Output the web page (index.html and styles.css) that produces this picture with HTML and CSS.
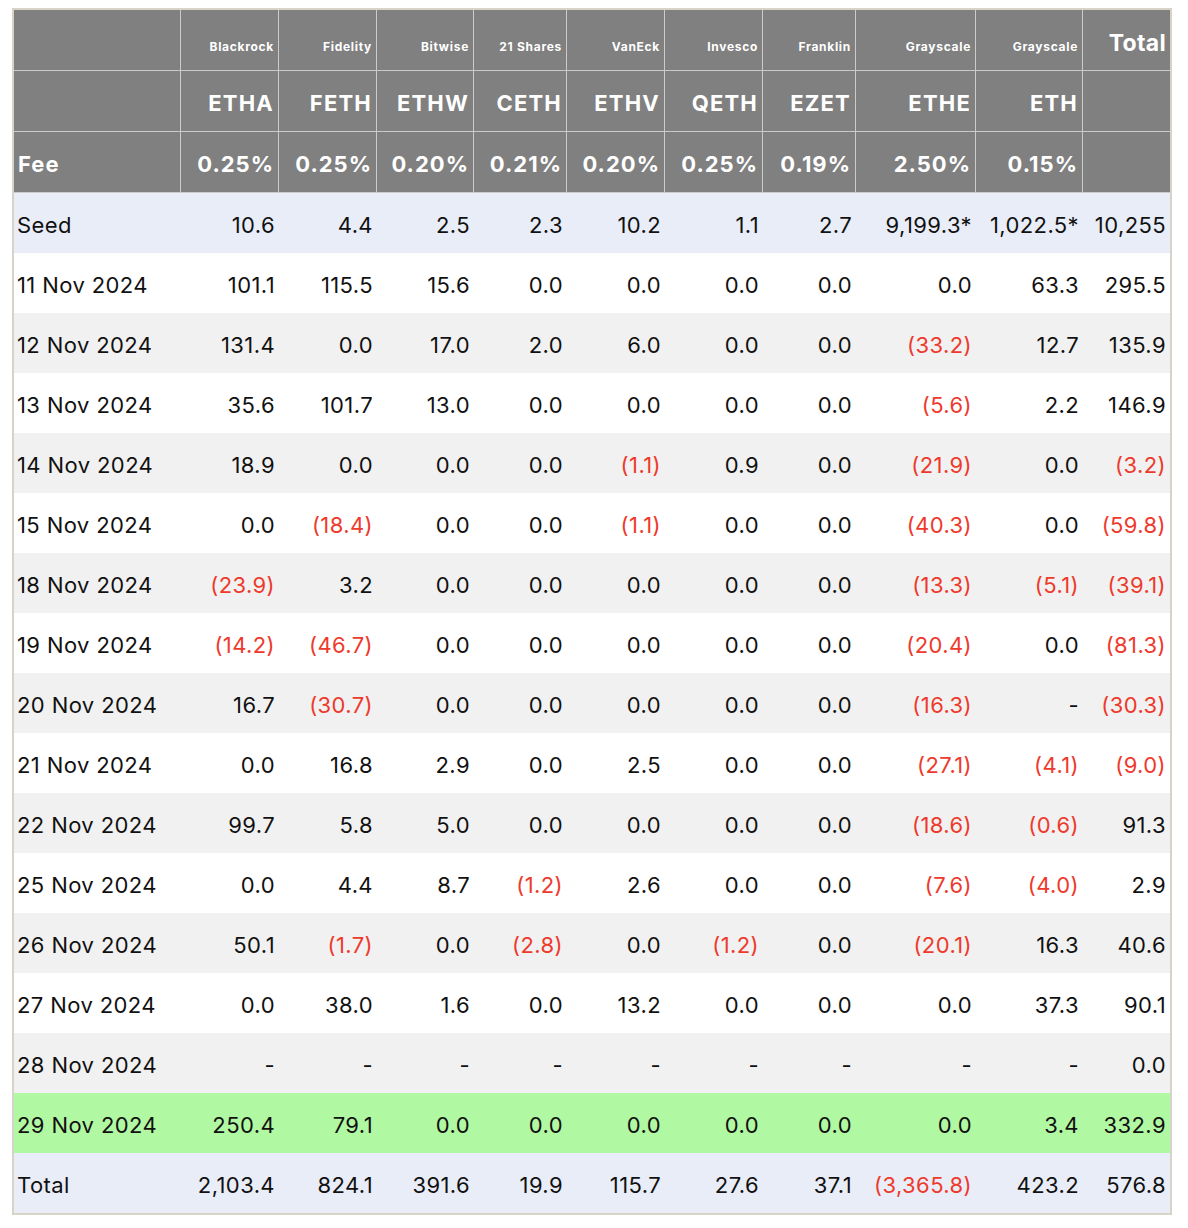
FILE: index.html
```html
<!DOCTYPE html>
<html lang="en">
<head>
<meta charset="utf-8">
<title>ETH ETF Flows</title>
<link rel="stylesheet" href="styles.css">
</head>
<body>
<div class="page">
  <div class="frame">
    <table class="flows">
      <colgroup>
        <col class="c-date"><col class="c98"><col class="c98"><col class="c97"><col class="c93"><col class="c98"><col class="c98"><col class="c93"><col class="c120"><col class="c107"><col class="c87">
      </colgroup>
      <thead>
        <tr class="h-issuer">
          <th class="first"></th>
          <th>Blackrock</th><th>Fidelity</th><th>Bitwise</th><th>21 Shares</th><th>VanEck</th><th>Invesco</th><th>Franklin</th><th>Grayscale</th><th>Grayscale</th>
          <th class="last total-h">Total</th>
        </tr>
        <tr class="h-ticker">
          <th class="first"></th>
          <th>ETHA</th><th>FETH</th><th>ETHW</th><th>CETH</th><th>ETHV</th><th>QETH</th><th>EZET</th><th>ETHE</th><th>ETH</th>
          <th class="last"></th>
        </tr>
        <tr class="h-fee">
          <th class="first">Fee</th>
          <th>0.25%</th><th>0.25%</th><th>0.20%</th><th>0.21%</th><th>0.20%</th><th>0.25%</th><th>0.19%</th><th>2.50%</th><th>0.15%</th>
          <th class="last"></th>
        </tr>
      </thead>
      <tbody>
        <tr class="seed"><td>Seed</td><td>10.6</td><td>4.4</td><td>2.5</td><td>2.3</td><td>10.2</td><td>1.1</td><td>2.7</td><td>9,199.3*</td><td>1,022.5*</td><td>10,255</td></tr>
        <tr class="odd"><td>11 Nov 2024</td><td>101.1</td><td>115.5</td><td>15.6</td><td>0.0</td><td>0.0</td><td>0.0</td><td>0.0</td><td>0.0</td><td>63.3</td><td>295.5</td></tr>
        <tr class="even"><td>12 Nov 2024</td><td>131.4</td><td>0.0</td><td>17.0</td><td>2.0</td><td>6.0</td><td>0.0</td><td>0.0</td><td class="neg">(33.2)</td><td>12.7</td><td>135.9</td></tr>
        <tr class="odd"><td>13 Nov 2024</td><td>35.6</td><td>101.7</td><td>13.0</td><td>0.0</td><td>0.0</td><td>0.0</td><td>0.0</td><td class="neg">(5.6)</td><td>2.2</td><td>146.9</td></tr>
        <tr class="even"><td>14 Nov 2024</td><td>18.9</td><td>0.0</td><td>0.0</td><td>0.0</td><td class="neg">(1.1)</td><td>0.9</td><td>0.0</td><td class="neg">(21.9)</td><td>0.0</td><td class="neg">(3.2)</td></tr>
        <tr class="odd"><td>15 Nov 2024</td><td>0.0</td><td class="neg">(18.4)</td><td>0.0</td><td>0.0</td><td class="neg">(1.1)</td><td>0.0</td><td>0.0</td><td class="neg">(40.3)</td><td>0.0</td><td class="neg">(59.8)</td></tr>
        <tr class="even"><td>18 Nov 2024</td><td class="neg">(23.9)</td><td>3.2</td><td>0.0</td><td>0.0</td><td>0.0</td><td>0.0</td><td>0.0</td><td class="neg">(13.3)</td><td class="neg">(5.1)</td><td class="neg">(39.1)</td></tr>
        <tr class="odd"><td>19 Nov 2024</td><td class="neg">(14.2)</td><td class="neg">(46.7)</td><td>0.0</td><td>0.0</td><td>0.0</td><td>0.0</td><td>0.0</td><td class="neg">(20.4)</td><td>0.0</td><td class="neg">(81.3)</td></tr>
        <tr class="even"><td>20 Nov 2024</td><td>16.7</td><td class="neg">(30.7)</td><td>0.0</td><td>0.0</td><td>0.0</td><td>0.0</td><td>0.0</td><td class="neg">(16.3)</td><td>-</td><td class="neg">(30.3)</td></tr>
        <tr class="odd"><td>21 Nov 2024</td><td>0.0</td><td>16.8</td><td>2.9</td><td>0.0</td><td>2.5</td><td>0.0</td><td>0.0</td><td class="neg">(27.1)</td><td class="neg">(4.1)</td><td class="neg">(9.0)</td></tr>
        <tr class="even"><td>22 Nov 2024</td><td>99.7</td><td>5.8</td><td>5.0</td><td>0.0</td><td>0.0</td><td>0.0</td><td>0.0</td><td class="neg">(18.6)</td><td class="neg">(0.6)</td><td>91.3</td></tr>
        <tr class="odd"><td>25 Nov 2024</td><td>0.0</td><td>4.4</td><td>8.7</td><td class="neg">(1.2)</td><td>2.6</td><td>0.0</td><td>0.0</td><td class="neg">(7.6)</td><td class="neg">(4.0)</td><td>2.9</td></tr>
        <tr class="even"><td>26 Nov 2024</td><td>50.1</td><td class="neg">(1.7)</td><td>0.0</td><td class="neg">(2.8)</td><td>0.0</td><td class="neg">(1.2)</td><td>0.0</td><td class="neg">(20.1)</td><td>16.3</td><td>40.6</td></tr>
        <tr class="odd"><td>27 Nov 2024</td><td>0.0</td><td>38.0</td><td>1.6</td><td>0.0</td><td>13.2</td><td>0.0</td><td>0.0</td><td>0.0</td><td>37.3</td><td>90.1</td></tr>
        <tr class="even"><td>28 Nov 2024</td><td>-</td><td>-</td><td>-</td><td>-</td><td>-</td><td>-</td><td>-</td><td>-</td><td>-</td><td>0.0</td></tr>
        <tr class="latest"><td>29 Nov 2024</td><td>250.4</td><td>79.1</td><td>0.0</td><td>0.0</td><td>0.0</td><td>0.0</td><td>0.0</td><td>0.0</td><td>3.4</td><td>332.9</td></tr>
        <tr class="totals"><td>Total</td><td>2,103.4</td><td>824.1</td><td>391.6</td><td>19.9</td><td>115.7</td><td>27.6</td><td>37.1</td><td class="neg">(3,365.8)</td><td>423.2</td><td>576.8</td></tr>
      </tbody>
    </table>
  </div>
</div>
</body>
</html>
```

FILE: styles.css
```css
html, body {
  margin: 0;
  padding: 0;
  background: #ffffff;
}

.page {
  padding: 8px 0 0 12px;
  font-family: Inter, "Liberation Sans", Arial, sans-serif;
  color: #111111;
}

.frame {
  width: 1156px;
  border: 2px solid #d7d3c7;
}

.flows {
  width: 1156px;
  table-layout: fixed;
  border-collapse: separate;
  border-spacing: 0;
}

.c-date { width: 167px; }
.c98 { width: 98px; }
.c97 { width: 97px; }
.c93 { width: 93px; }
.c120 { width: 120px; }
.c107 { width: 107px; }
.c87 { width: 87px; }

.flows th,
.flows td {
  box-sizing: border-box;
  padding: 0;
  text-align: right;
  white-space: nowrap;
}

/* header */
.flows th {
  background: #808080;
  color: #ffffff;
  font-weight: 700;
  border-right: 1px solid #cbcbcb;
  border-bottom: 1px solid #cbcbcb;
  padding-right: 4px;
}

.flows th.last {
  border-right: none;
}

.flows th.first {
  text-align: left;
  padding-left: 4px;
}

.h-issuer th {
  height: 61px;
  vertical-align: baseline;
  font-size: 12px;
  letter-spacing: 0.7px;
  line-height: 12px;
  padding-top: 31px;
}

.h-issuer th.total-h {
  font-size: 23px;
  line-height: 23px;
  letter-spacing: 0.3px;
  padding-top: 20px;
}

.h-ticker th {
  height: 61px;
  vertical-align: middle;
  font-size: 22px;
  letter-spacing: 1.2px;
  padding-top: 3px;
}

.h-fee th {
  height: 61px;
  vertical-align: middle;
  font-size: 22px;
  letter-spacing: 1px;
  padding-top: 3px;
}

/* body */
.flows td {
  height: 60px;
  font-size: 22px;
  letter-spacing: 0.4px;
  vertical-align: middle;
  padding: 3px 4px 0 0;
}

.flows td:first-child {
  text-align: left;
  padding-left: 3px;
}

.odd td { background: #ffffff; }
.even td { background: #f1f1f1; }
.seed td,
.totals td { background: #e9edf8; }
.latest td { background: #b1f8a3; }

.flows td.neg {
  color: #ee3a2c;
}
```
